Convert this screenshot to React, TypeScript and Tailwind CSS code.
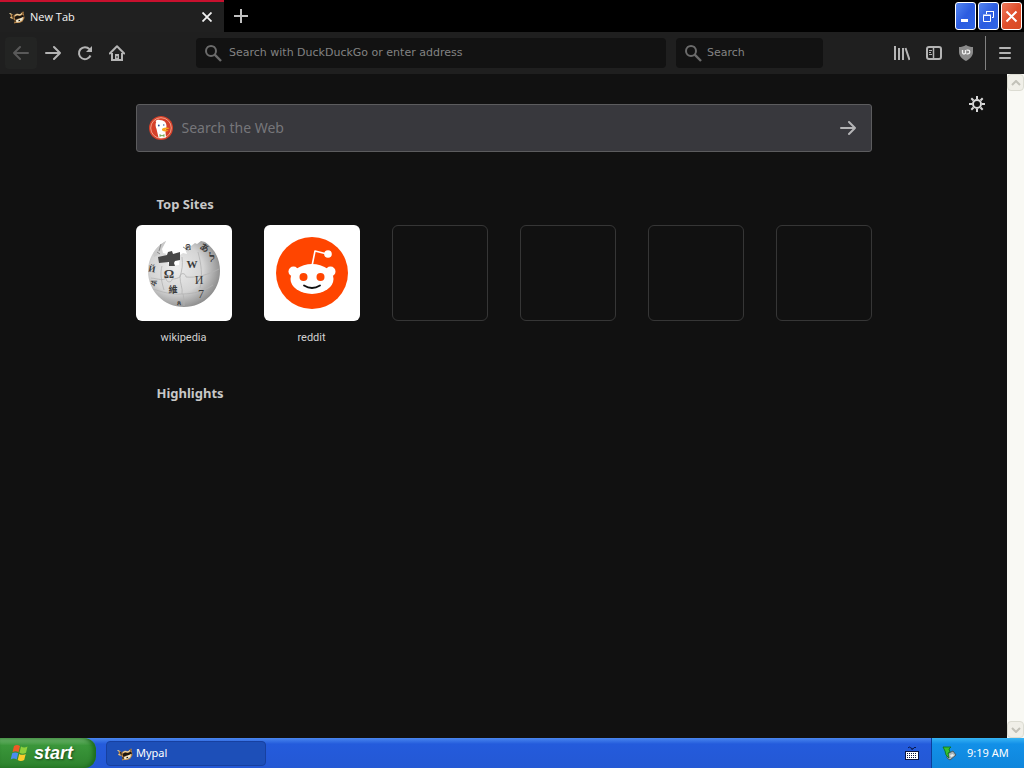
import type { ReactNode } from 'react';

const MypalIcon = () => (
  <svg viewBox="0 0 16 16" className="h-4 w-4 shrink-0" aria-hidden="true">
    <path d="M1 4.500l3 1 1 2.500-1 2-3-1 1-2z" fill="#b98548" />
    <path d="M0.500 4.500l2 .5M1.500 8.500l2 .5" stroke="#e8d6a2" strokeWidth="1" />
    <path d="M3.500 6l1 3" stroke="#2a2018" strokeWidth="1.200" />
    <path d="M5 6l3-1.500 3 .8L13 3l1.500-.5.5 3.500.5 3-2 3.500-3 1.500-3.500 0-2 .5.500-2.500-1-2z" fill="#b98548" />
    <path d="M5.500 8l2.500-1.500 3 .5 3-1.500 1 2-2.500 1.500-3 .5-3 1.500z" fill="#1c1510" />
    <path d="M6 6.500l2-1 3 .5 2-1.500" fill="none" stroke="#eadcb4" strokeWidth="1" />
    <path d="M7 11l3-1 4-2-.5 3-3 2-3 .5z" fill="#f2ead2" />
    <path d="M5.500 11.500l1 1M9.500 12l1.500-.8" stroke="#15110c" strokeWidth="1.200" />
    <path d="M13 3.500l1 1" stroke="#2a2018" strokeWidth="1" />
  </svg>
);

const SearchIcon = () => (
  <svg viewBox="0 0 18 18" className="h-[18px] w-[18px] shrink-0" fill="none" stroke="#6b6b6b" aria-hidden="true">
    <circle cx="7" cy="7" r="5" strokeWidth="2" />
    <path d="M10.700 10.700L17 17" strokeWidth="2.400" />
  </svg>
);

const ArrowIcon = ({ flip = false }: { flip?: boolean }) => (
  <svg
    viewBox="0 0 16 16"
    className={flip ? 'h-4 w-4 rotate-180' : 'h-4 w-4'}
    fill="none"
    stroke="currentColor"
    strokeWidth="2"
    strokeLinecap="round"
    strokeLinejoin="round"
    aria-hidden="true"
  >
    <path d="M1 8h14M9 2l6 6-6 6" />
  </svg>
);

const DuckIcon = () => (
  <svg viewBox="0 0 24 24" className="h-6 w-6 shrink-0" aria-hidden="true">
    <circle cx="12" cy="12" r="12" fill="#d5402a" />
    <circle cx="12" cy="12" r="10.300" fill="none" stroke="#f0a088" strokeWidth="1" />
    <path d="M9.500 21.500L7.500 13C5.500 8 7 4.200 11 4.300c4-.3 6.500 2 6.500 6l-1 6 .5 5c-2 .8-5 1-7.500.2z" fill="#fff" />
    <path d="M6.500 5c1.500-1.700 4-1.500 5.500-.8l-4 3z" fill="#fff" />
    <path d="M13.500 12.500c2-1.300 5-1.300 7-.5-1 1-3 1.300-4.500 1.800 1.200.6 2.500.5 3.500.6-1.500 1.300-4.500 1.500-6 .3-.8-.7-.7-1.600 0-2.200z" fill="#f8a51c" />
    <circle cx="9.800" cy="9.500" r="0.900" fill="#2d4f8e" />
    <circle cx="14.800" cy="9" r="0.700" fill="#2d4f8e" />
    <path d="M10.500 18l2.500 1.200 2.500-1.200v3l-2.500-1-2.500 1z" fill="#7fae5c" />
  </svg>
);

const WikipediaIcon = () => (
  <svg viewBox="0 0 72 72" className="h-[72px] w-[72px]" aria-hidden="true">
    <defs>
      <radialGradient id="globe" cx="40%" cy="42%" r="62%">
        <stop offset="0" stopColor="#ececec" />
        <stop offset="0.6" stopColor="#d4d4d4" />
        <stop offset="1" stopColor="#8c8c8c" />
      </radialGradient>
    </defs>
    <path
      d="M18 4l-4 8 1 4 4 1-3 3 6 9 9-1 1-10 3-2 4 1-2-5 3-5 3 2 4-3 2 1 4-3 4 1C67 12 72 22 72 34 72 54 56 70 36 70S0 54 0 34C0 21 7 10 18 4z"
      fill="url(#globe)"
    />
    <path d="M18 4l-5 8-3 6-4 2-1-3C8 11 12 7 18 4z" fill="#c9c9c9" />
    <path d="M10 20l9-2 1-3 4-1 1 3 7-2 0 8-5 1-1 2 1 3-6 0 0-4-10 1z" fill="#484848" />
    <path d="M13 7l-2 7M35 10l5 3 3-1M9 15l3 2" stroke="#8a8a8a" strokeWidth="1" fill="none" />
    <path
      d="M3 41c8 1 12 3 15 0 0 5 6 5 6 1 4 0 6-1 8-2m0 0c0-5 6-4 6 0 10 1 22-2 33-8M34 20c1 8 0 13-2 20 0 7 3 11 2 17m-29-5c9 3 19 6 29 5 12 0 22-3 31-9M50 15c3 11 5 24 2 36m-38-22c-2 7-1 14 2 24M35 57c1 4 1 8 1 12"
      fill="none"
      stroke="#b2b2b2"
      strokeWidth="0.800"
    />
    <g fill="#3b3b3b" fontFamily="Liberation Serif, Noto Sans CJK SC, serif" fontSize="13" fontWeight="bold" textAnchor="middle">
      <text x="21" y="41">Ω</text>
      <text x="44" y="31" fontSize="11">W</text>
      <text x="51" y="47" fontSize="12" fontWeight="normal">И</text>
      <text x="25" y="56" fontSize="9" fontFamily="Noto Sans CJK SC, sans-serif">維</text>
      <text x="53" y="61" fontSize="12" fontWeight="normal">7</text>
      <text x="64" y="25" fontSize="12">ל</text>
      <text x="57" y="14" fontSize="9" transform="rotate(30 57 10)">あ</text>
      <text x="40" y="13" fontSize="9" fontWeight="normal">ค</text>
      <text x="4" y="35" fontSize="9" transform="rotate(10 4 32)">Й</text>
      <text x="6" y="49" fontSize="8">ফ</text>
      <text x="31" y="68" fontSize="7">ጸ</text>
    </g>
  </svg>
);

const RedditIcon = () => (
  <svg viewBox="0 0 72 72" className="h-[72px] w-[72px]" aria-hidden="true">
    <circle cx="36" cy="36" r="36" fill="#ff4500" />
    <path d="M36 29l3-15 12 3" fill="none" stroke="#fff" strokeWidth="1.600" strokeLinejoin="round" />
    <circle cx="52" cy="17" r="3.800" fill="#fff" />
    <circle cx="17.500" cy="34.500" r="5" fill="#fff" />
    <circle cx="54.500" cy="34.500" r="5" fill="#fff" />
    <ellipse cx="36" cy="42" rx="21.500" ry="15" fill="#fff" />
    <circle cx="27.500" cy="40" r="4" fill="#ff4500" />
    <circle cx="44.500" cy="40" r="4" fill="#ff4500" />
    <path d="M28 48.500q8 5 16 0" fill="none" stroke="#111" strokeWidth="1.800" strokeLinecap="round" />
  </svg>
);

const GearIcon = () => (
  <svg viewBox="0 0 16 16" className="h-4 w-4" fill="none" stroke="#d8d8d8" aria-hidden="true">
    <circle cx="8" cy="8" r="4" strokeWidth="2" />
    <path
      d="M8 0v3M8 13v3M0 8h3M13 8h3M2.300 2.300l2.200 2.200M11.500 11.500l2.200 2.200M2.300 13.700l2.200-2.200M11.500 4.500l2.200-2.200"
      strokeWidth="2"
    />
  </svg>
);

const WindowsLogo = () => (
  <svg viewBox="0 0 20 18" className="h-[18px] w-5 shrink-0" aria-hidden="true">
    <path d="M4 2c2-1.200 4-1.200 6 0L8.500 8.200c-2-1.200-4-1.200-6 0z" fill="#ef5a26" />
    <path d="M11 2.600c2 1.200 4.300 1.200 6.500 0L16 8.800c-2.200 1.200-4.500 1.200-6.500 0z" fill="#8ed03c" />
    <path d="M2.200 9.300c2-1.200 4-1.200 6 0l-1.500 6.200c-2-1.200-4-1.200-6 0z" fill="#4b8cf0" />
    <path d="M9.200 9.900c2 1.200 4.300 1.200 6.500 0l-1.500 6.200c-2.200 1.200-4.500 1.200-6.500 0z" fill="#fbcb2c" />
  </svg>
);

interface IconButtonProps {
  label: string;
  className?: string;
  children: ReactNode;
}

const IconButton = ({ label, className = 'text-[#b4b4b4]', children }: IconButtonProps) => (
  <button type="button" aria-label={label} className={`flex h-8 w-8 shrink-0 items-center justify-center rounded-sm ${className}`}>
    {children}
  </button>
);

const TabBar = () => (
  <header className="flex h-8 shrink-0 bg-black">
    <div className="flex w-56 items-center border-t-2 border-[#c8102e] bg-[#202020] pl-[9px] pr-[7px]">
      <MypalIcon />
      <span className="ml-[5px] flex-1 font-['Open_Sans'] text-[11px] text-[#f5f5f5]">New Tab</span>
      <button type="button" aria-label="Close tab" className="flex h-5 w-5 items-center justify-center">
        <svg viewBox="0 0 10 10" className="h-[10px] w-[10px]" stroke="#f0f0f0" strokeWidth="1.800" aria-hidden="true">
          <path d="M0.500 0.500l9 9M9.500 0.500l-9 9" />
        </svg>
      </button>
    </div>
    <IconButton label="Open a new tab" className="ml-px text-[#c0c0c0]">
      <svg viewBox="0 0 14 14" className="h-[14px] w-[14px]" stroke="currentColor" strokeWidth="2" aria-hidden="true">
        <path d="M7 0v14M0 7h14" />
      </svg>
    </IconButton>
    <div className="ml-auto flex gap-[2px] pr-[2px] pt-[2px]">
      <button type="button" aria-label="Minimize" className="flex h-7 w-[21px] items-center justify-center rounded-[3px] border border-white bg-linear-to-br from-[#5585f0] via-[#2c5ce0] to-[#2f66e6]">
        <svg viewBox="0 0 13 13" className="h-[13px] w-[13px]" aria-hidden="true">
          <path d="M2 9h7v3H2z" fill="#fff" />
        </svg>
      </button>
      <button type="button" aria-label="Restore" className="flex h-7 w-[21px] items-center justify-center rounded-[3px] border border-white bg-linear-to-br from-[#5585f0] via-[#2c5ce0] to-[#2f66e6]">
        <svg viewBox="0 0 13 13" className="h-[13px] w-[13px]" fill="none" stroke="#fff" aria-hidden="true">
          <path d="M4.500 4V1.500h7v6H10M4 1.500h8" />
          <path d="M1.500 5.500h7v6h-7zM1 5h8" />
        </svg>
      </button>
      <button type="button" aria-label="Close" className="flex h-7 w-[21px] items-center justify-center rounded-[3px] border border-white bg-linear-to-br from-[#ef7a5c] via-[#e04f2c] to-[#d84a24]">
        <svg viewBox="0 0 13 13" className="h-[13px] w-[13px]" stroke="#fff" strokeWidth="2" aria-hidden="true">
          <path d="M1.500 1.500l10 10M11.500 1.500l-10 10" />
        </svg>
      </button>
    </div>
  </header>
);

const NavBar = () => (
  <nav className="flex h-[42px] shrink-0 items-center bg-[#1f1f1f] pl-[5px] pr-[3px]">
    <IconButton label="Back" className="bg-[#232423] text-[#595959]">
      <ArrowIcon flip />
    </IconButton>
    <IconButton label="Forward">
      <ArrowIcon />
    </IconButton>
    <IconButton label="Reload">
      <svg viewBox="0 0 16 16" className="h-4 w-4" fill="none" stroke="currentColor" strokeWidth="2" aria-hidden="true">
        <path d="M13.500 10.500A6 6 0 1 1 12.500 4.200" />
        <path d="M15 1v6H9z" fill="currentColor" stroke="none" />
      </svg>
    </IconButton>
    <IconButton label="Home">
      <svg viewBox="0 0 16 16" className="h-4 w-4" fill="none" stroke="currentColor" strokeWidth="2" aria-hidden="true">
        <path d="M0.800 8.500L8 1.300l7.200 7.200" strokeLinecap="round" strokeLinejoin="round" />
        <path d="M3 8v7h10V8" />
        <path d="M6 15V9h4v6z" fill="currentColor" stroke="none" />
        <path d="M8 11v2" stroke="#1f1f1f" strokeWidth="1" />
      </svg>
    </IconButton>
    <label className="ml-[63px] flex h-[30px] flex-1 items-center gap-[7px] rounded-sm bg-[#121212] pl-2">
      <SearchIcon />
      <input
        type="text"
        aria-label="Search with DuckDuckGo or enter address"
        placeholder="Search with DuckDuckGo or enter address"
        className="w-full bg-transparent font-['DejaVu_Sans'] text-[11px] text-[#d0d0d0] outline-none placeholder:text-[#838383]"
      />
    </label>
    <label className="ml-[10px] mr-[63px] flex h-[30px] w-[147px] items-center gap-[5px] rounded-sm bg-[#121212] pl-2">
      <SearchIcon />
      <input
        type="text"
        aria-label="Search"
        placeholder="Search"
        className="w-full bg-transparent font-['DejaVu_Sans'] text-[11px] text-[#d0d0d0] outline-none placeholder:text-[#838383]"
      />
    </label>
    <IconButton label="Library">
      <svg viewBox="0 0 16 16" className="h-4 w-4" stroke="currentColor" strokeWidth="2" aria-hidden="true">
        <path d="M1 1v14M5 3v12M9 3v12M11.500 3l4 12" />
      </svg>
    </IconButton>
    <IconButton label="Sidebars">
      <svg viewBox="0 0 16 16" className="h-4 w-4" fill="none" stroke="currentColor" aria-hidden="true">
        <rect x="1" y="2" width="14" height="12" rx="2" strokeWidth="2" />
        <path d="M7.500 2v12" strokeWidth="1.500" />
        <path d="M3 5.500h3M3 7.500h2M3 9.500h3" />
      </svg>
    </IconButton>
    <IconButton label="uBlock Origin">
      <svg viewBox="0 0 16 16" className="h-4 w-4" aria-hidden="true">
        <path d="M8 0c2.500 1.500 4.500 2 7 2v5c0 4-3 7-7 9-4-2-7-5-7-9V2c2.500 0 4.500-.5 7-2z" fill="#8a8a8a" />
        <path d="M4.500 5v2.500q0 1.500 1.500 1.500t1.500-1.500V5v4" fill="none" stroke="#f2f2f2" strokeWidth="1.300" />
        <path d="M8.500 5.200h1.500a1.800 1.800 0 0 1 0 3.600H8.500" fill="none" stroke="#f2f2f2" strokeWidth="1.300" />
      </svg>
    </IconButton>
    <div className="mx-[3px] h-[34px] w-px bg-[#828282]" />
    <IconButton label="Open menu">
      <svg viewBox="0 0 16 16" className="h-4 w-4" stroke="currentColor" strokeWidth="2" strokeLinecap="round" aria-hidden="true">
        <path d="M3 3h10M3 8h10M3 13h10" />
      </svg>
    </IconButton>
  </nav>
);

const sites: { name: string; icon: ReactNode }[] = [
  { name: 'wikipedia', icon: <WikipediaIcon /> },
  { name: 'reddit', icon: <RedditIcon /> },
];

const NewTabPage = () => (
  <main className="relative flex-1 bg-[#111111] px-8 pt-[30px]">
    <button type="button" aria-label="Customize your New Tab page" className="absolute right-[22px] top-[22px]">
      <GearIcon />
    </button>
    <div className="mx-auto max-w-[736px] font-['Noto_Sans']">
      <form className="flex h-12 items-center rounded-[3px] border border-[#5c5c5e] bg-[#38383d] pl-3 pr-[15px]">
        <DuckIcon />
        <input
          type="search"
          aria-label="Search the Web"
          placeholder="Search the Web"
          className="ml-[9px] min-w-0 flex-1 bg-transparent font-['Noto_Sans'] text-sm text-[#ddd] outline-none placeholder:text-[#76767a]"
        />
        <button type="button" aria-label="Submit search" className="text-[#b4b4b6]">
          <ArrowIcon />
        </button>
      </form>

      <section className="mt-[42px]">
        <h2 className="pl-[21px] text-[13px] font-bold leading-5 text-[#c8c8c8]">Top Sites</h2>
        <ul className="mt-[11px] grid grid-cols-[repeat(auto-fill,96px)] gap-8">
          {sites.map((site) => (
            <li key={site.name}>
              <a href={`#${site.name}`} className="block text-center font-['Roboto'] text-[11px] leading-[18px] text-[#d0d0d0]">
                <span className="mb-2 flex h-24 items-center justify-center rounded-md bg-white">{site.icon}</span>
                {site.name}
              </a>
            </li>
          ))}
          {[1, 2, 3, 4].map((slot) => (
            <li key={slot} className="h-24 rounded-md border border-[#363636]" />
          ))}
        </ul>
      </section>

      <section className="mt-9">
        <h2 className="pl-[21px] text-[13px] font-bold leading-5 text-[#c8c8c8]">Highlights</h2>
      </section>
    </div>
  </main>
);

const ScrollArrow = ({ down = false }: { down?: boolean }) => (
  <div className="flex h-[17px] items-center justify-center rounded-sm border border-[#dcdcd2] bg-[#f0efe8]">
    <svg viewBox="0 0 10 6" className={down ? 'w-[10px] rotate-180' : 'w-[10px]'} fill="none" stroke="#c2c1b8" strokeWidth="2" aria-hidden="true">
      <path d="M1 5l4-4 4 4" />
    </svg>
  </div>
);

const Taskbar = () => (
  <footer className="flex h-[30px] shrink-0 bg-linear-to-b from-[#4a86ee] via-[#245bdc] via-20% to-[#2458d4] font-['Noto_Sans'] text-[11px] text-white">
    <button
      type="button"
      className="flex w-24 items-center gap-1 rounded-r-xl bg-linear-to-b from-[#72b872] via-[#3a963a] via-25% to-[#2d822d] pl-[10px] shadow-[inset_-3px_0_4px_#1c6a1c]"
    >
      <WindowsLogo />
      <span className="font-['Liberation_Sans'] text-lg font-bold italic leading-5 [text-shadow:1px_1px_2px_#1c4a1c]">start</span>
    </button>
    <button
      type="button"
      className="mb-[2px] ml-[10px] mt-[3px] flex w-40 items-center gap-[3px] rounded-sm border border-[#1740a0] bg-[#1d4fb8] pl-[10px]"
    >
      <MypalIcon />
      Mypal
    </button>
    <div className="ml-auto flex items-center pr-3">
      <svg viewBox="0 0 14 14" className="h-[14px] w-[14px]" aria-label="Keyboard" role="img">
        <path d="M3 2q1-2 3 0t3 0 2 0M7 4V2" fill="none" stroke="#0a1a50" strokeWidth="1" />
        <rect x="0.500" y="5.500" width="13" height="8" fill="#fff" stroke="#0a1440" />
        <path d="M2 7.500h10M2 9.500h10M2 11.500h10" stroke="#0a1440" strokeWidth="1" strokeDasharray="1 1" />
      </svg>
    </div>
    <div className="flex w-[93px] items-center gap-[9px] border-l border-[#0b3f9c] bg-linear-to-b from-[#35b4f4] via-[#1290e8] via-20% to-[#0f86dc] pl-[10px]">
      <svg viewBox="0 0 16 16" className="h-4 w-4 shrink-0" aria-label="Safely remove hardware" role="img">
        <path d="M5 9l6-3 3 4-6 5-3-2z" fill="#a9b4b8" stroke="#3c4a50" strokeWidth="0.800" />
        <path d="M8 10l3-1 1 2-3 1z" fill="#e8eef0" />
        <path d="M1 2l8 0-2 2 1 3-2 1 1 5-3-3-1-4z" fill="#36c030" stroke="#0b6e18" strokeWidth="0.800" />
      </svg>
      <time className="whitespace-nowrap">9:19 AM</time>
    </div>
  </footer>
);

export default function App() {
  return (
    <div className="flex h-screen flex-col bg-[#111111]">
      <TabBar />
      <NavBar />
      <div className="flex min-h-0 flex-1">
        <NewTabPage />
        <div className="flex w-[17px] shrink-0 flex-col justify-between bg-[#f9f9f4]">
          <ScrollArrow />
          <ScrollArrow down />
        </div>
      </div>
      <Taskbar />
    </div>
  );
}
